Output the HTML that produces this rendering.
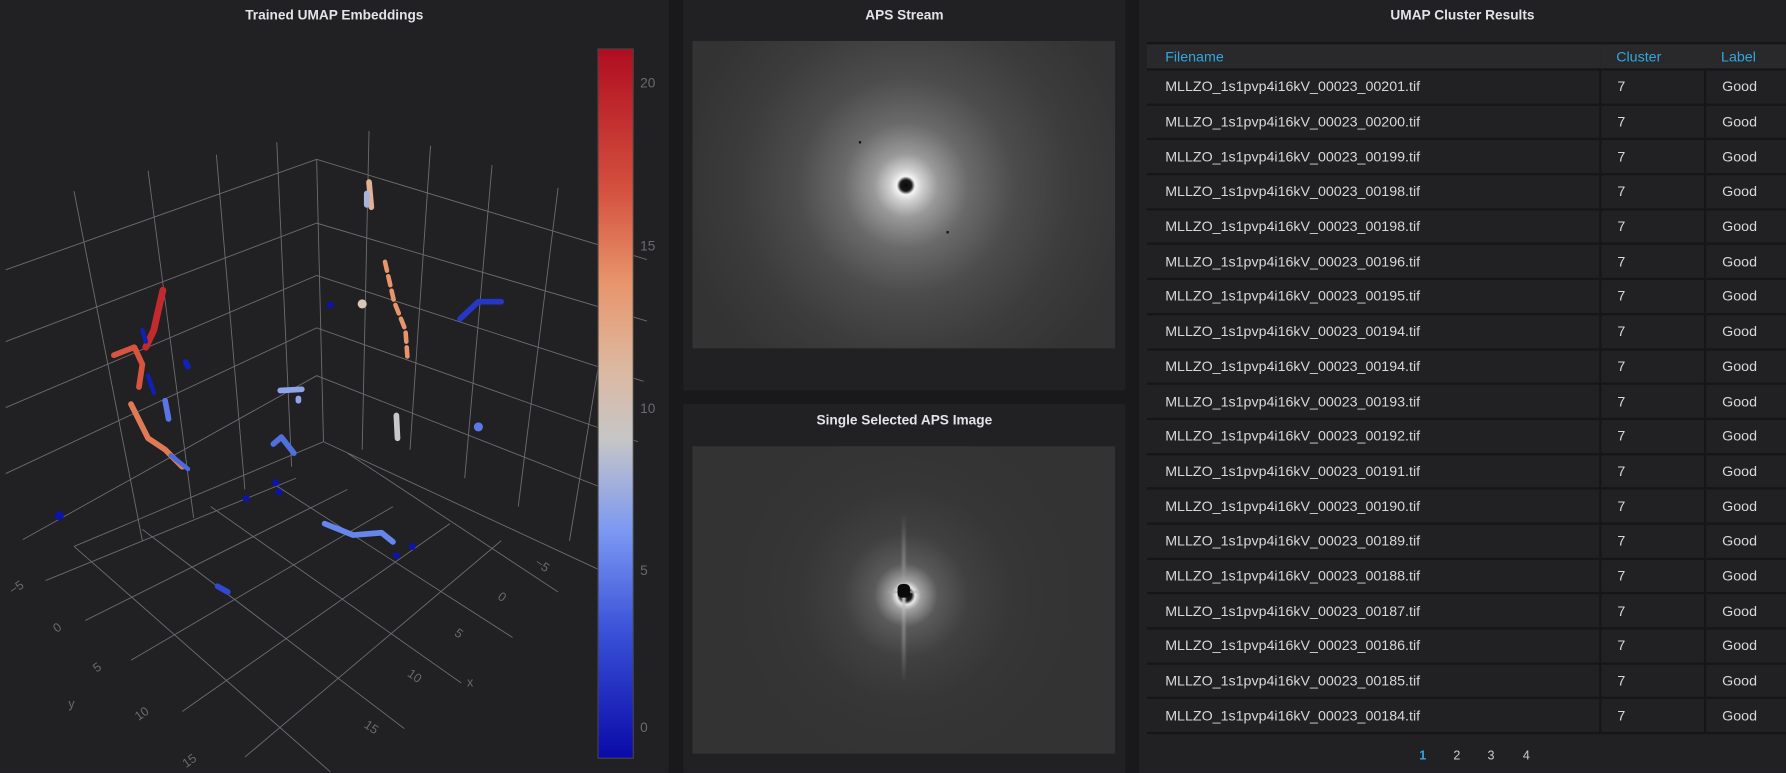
<!DOCTYPE html>
<html><head><meta charset="utf-8"><style>
html,body{margin:0;padding:0;background:#19191b;overflow:hidden;width:1786px;height:773px}
#w{position:absolute;left:0;top:0;width:1568px;height:679px;transform:scale(1.139,1.1384);transform-origin:0 0;font-family:"Liberation Sans",sans-serif}
.p{position:absolute;background:#212124;overflow:hidden}
.t{position:absolute;left:0;right:0;text-align:center;color:#e4e4e8;font-size:12px;font-weight:bold}
.img{position:absolute;background:#3a3a3a}
table{border-collapse:collapse;table-layout:fixed;position:absolute;left:7px;top:37px;width:561px;font-size:12.5px;color:#d8d8d8}
th{color:#33a7dc;font-weight:normal;text-align:left;height:21px;background:#29292c;border-top:2px solid #161618;border-bottom:2px solid #161618;padding:0}
td{height:28.7px;border-bottom:2px solid #161618;padding:0}
td.c{border-left:2px solid #161618}
.pg{position:absolute;top:658px;font-size:11px;color:#ccc}
</style></head><body><div id="w">
<div class="p" style="left:0;top:0;width:587px;height:679px">
<div class="t" style="top:6px">Trained UMAP Embeddings</div>
<svg width="587" height="679" style="position:absolute;left:0;top:0">
<g stroke="#6c6c70" stroke-width="0.8" fill="none">
<path d="M5,237 L278,140 L568,228"/>
<path d="M5,300 L278,196 L568,282"/>
<path d="M5,358 L278,242 L565,335"/>
<path d="M5,416 L278,288 L560,388"/>
<path d="M20,474 L278,330 L553,438"/>
<path d="M278,140 L284,388"/>
<path d="M65,168 L125,475"/><path d="M130,150 L170,455"/><path d="M190,136 L215,430"/><path d="M243,125 L256,410"/>
<path d="M324,115 L318,395"/><path d="M378,128 L360,395"/><path d="M432,145 L408,420"/><path d="M490,165 L455,445"/><path d="M548,185 L500,475"/>
<path d="M65,480 L284,388 L525,500"/>
<path d="M40,510 L260,420"/><path d="M75,545 L305,430"/><path d="M115,580 L345,445"/><path d="M160,625 L395,460"/><path d="M215,665 L440,475"/>
<path d="M65,480 L290,678"/><path d="M125,465 L355,640"/><path d="M185,445 L405,600"/><path d="M240,425 L450,560"/><path d="M305,398 L490,520"/>
</g>
<g fill="none" stroke-linecap="round" stroke-linejoin="round">
<path d="M143,255 L135,290 L128,305" stroke="#c22a2e" stroke-width="6"/>
<path d="M100,312 L118,305 L125,320 L122,340" stroke="#d9543f" stroke-width="5"/>
<path d="M115,355 L125,375 L130,385 L145,395 L160,410" stroke="#e07a55" stroke-width="5"/>
<path d="M150,400 L165,412" stroke="#4a6ae0" stroke-width="4"/>
<path d="M145,352 L148,368" stroke="#5a76e6" stroke-width="5"/>
<path d="M125,290 L128,300 M130,330 L135,345" stroke="#1020b0" stroke-width="4"/>
<path d="M163,318 L165,322" stroke="#1222b8" stroke-width="5"/>
<path d="M324,160 L326,182" stroke="#e2b296" stroke-width="5"/>
<path d="M322,170 L322,180" stroke="#a8b4d8" stroke-width="5"/>
<path d="M338,230 L346,265 L356,290 L358,318" stroke="#e8956b" stroke-width="4" stroke-dasharray="8,5"/>
<path d="M404,280 L420,265 L440,265" stroke="#2637c6" stroke-width="5"/>
<path d="M348,365 L349,385" stroke="#c8c8c8" stroke-width="5"/>
<path d="M246,343 L265,342 M262,350 L262,352" stroke="#8fa4ea" stroke-width="5"/>
<path d="M240,390 L247,384 L258,398" stroke="#5070e0" stroke-width="5"/>
<path d="M285,460 L310,470 L335,468 L345,476" stroke="#6686ee" stroke-width="5"/>
<path d="M191,515 L200,520" stroke="#3348d0" stroke-width="5"/>
</g>
<g fill="#0c14ac">
<circle cx="290" cy="268" r="3"/><circle cx="52" cy="453" r="4"/><circle cx="216" cy="438" r="3"/><circle cx="245" cy="432" r="3"/><circle cx="362" cy="480" r="3"/><circle cx="348" cy="488" r="3"/><circle cx="242" cy="424" r="3"/>
</g>
<circle cx="318" cy="267" r="4" fill="#d8c8b8"/><circle cx="420" cy="375" r="4" fill="#5a78e6"/>
<defs><linearGradient id="cb" x1="0" y1="0" x2="0" y2="1">
<stop offset="0" stop-color="#b00d20"/><stop offset="0.2" stop-color="#d4513f"/><stop offset="0.33" stop-color="#e8956b"/><stop offset="0.45" stop-color="#ddb8a0"/><stop offset="0.55" stop-color="#c6c6c6"/><stop offset="0.68" stop-color="#7c98f2"/><stop offset="0.82" stop-color="#3a52d8"/><stop offset="1" stop-color="#0a0aa8"/></linearGradient></defs>
<rect x="525" y="43" width="31" height="623" fill="url(#cb)" stroke="#444" stroke-width="1"/>
<g fill="#6a6a6e" font-size="12" font-family="Liberation Sans,sans-serif">
<text x="562" y="77">20</text><text x="562" y="220">15</text><text x="562" y="363">10</text><text x="562" y="505">5</text><text x="562" y="643">0</text>
</g>
<g fill="#6a6a6e" font-size="11" font-family="Liberation Sans,sans-serif">
<text x="8" y="520" transform="rotate(-35 14 516)">−5</text><text x="47" y="555" transform="rotate(-35 50 551)">0</text><text x="82" y="590" transform="rotate(-35 85 586)">5</text><text x="60" y="622">y</text><text x="118" y="630" transform="rotate(-35 125 626)">10</text><text x="160" y="672" transform="rotate(-35 166 668)">15</text>
<text x="470" y="500" transform="rotate(35 476 496)">−5</text><text x="438" y="528" transform="rotate(35 441 524)">0</text><text x="400" y="560" transform="rotate(35 403 556)">5</text><text x="410" y="603">x</text><text x="358" y="598" transform="rotate(35 365 594)">10</text><text x="320" y="643" transform="rotate(35 327 639)">15</text>
</g>
</svg>
</div>
<div class="p" style="left:600px;top:0;width:388px;height:343px">
<div class="t" style="top:6px">APS Stream</div>
<div class="img" style="left:8px;top:36px;width:371px;height:270px;background:radial-gradient(circle at 50.5% 47%,#0a0a0a 0,#1a1a1a 5px,#f4f4f4 8px,#d0d0d0 14px,#999 28px,#6a6a6a 55px,#4c4c4c 95px,#3c3c3c 145px,#333 200px)"></div>
<div style="position:absolute;left:154px;top:124px;width:2px;height:2px;background:#111"></div>
<div style="position:absolute;left:231px;top:203px;width:2px;height:2px;background:#111"></div>
</div>
<div class="p" style="left:600px;top:355px;width:388px;height:324px">
<div class="t" style="top:7px">Single Selected APS Image</div>
<div class="img" style="left:8px;top:37px;width:371px;height:270px;background:radial-gradient(circle at 50.5% 48.5%,#0a0a0a 0,#151515 5px,#e8e8e8 8px,#a0a0a0 13px,#5a5a5a 28px,#404040 55px,#363636 95px,#333 150px)"></div>
<div style="position:absolute;left:192px;top:95px;width:3px;height:150px;background:linear-gradient(rgba(60,60,60,0),#888 35%,#ddd 50%,#888 65%,rgba(60,60,60,0));filter:blur(1px)"></div>
<div style="position:absolute;left:176px;top:164px;width:36px;height:2px;background:linear-gradient(90deg,rgba(60,60,60,0),#aaa,rgba(60,60,60,0))"></div>
<div style="position:absolute;left:188px;top:158px;width:11px;height:12px;border-radius:4px;background:#0a0a0a"></div>
</div>
<div class="p" style="left:1000px;top:0;width:568px;height:679px">
<div class="t" style="top:6px">UMAP Cluster Results</div>
<table>
<colgroup><col style="width:398px"><col style="width:92px"><col style="width:71px"></colgroup>
<tr><th style="padding-left:16px">Filename</th><th style="padding-left:14px">Cluster</th><th style="padding-left:14px">Label</th></tr>
<tr><td style="padding-left:16px">MLLZO_1s1pvp4i16kV_00023_00201.tif</td><td class="c" style="padding-left:14px">7</td><td class="c" style="padding-left:14px">Good</td></tr>
<tr><td style="padding-left:16px">MLLZO_1s1pvp4i16kV_00023_00200.tif</td><td class="c" style="padding-left:14px">7</td><td class="c" style="padding-left:14px">Good</td></tr>
<tr><td style="padding-left:16px">MLLZO_1s1pvp4i16kV_00023_00199.tif</td><td class="c" style="padding-left:14px">7</td><td class="c" style="padding-left:14px">Good</td></tr>
<tr><td style="padding-left:16px">MLLZO_1s1pvp4i16kV_00023_00198.tif</td><td class="c" style="padding-left:14px">7</td><td class="c" style="padding-left:14px">Good</td></tr>
<tr><td style="padding-left:16px">MLLZO_1s1pvp4i16kV_00023_00198.tif</td><td class="c" style="padding-left:14px">7</td><td class="c" style="padding-left:14px">Good</td></tr>
<tr><td style="padding-left:16px">MLLZO_1s1pvp4i16kV_00023_00196.tif</td><td class="c" style="padding-left:14px">7</td><td class="c" style="padding-left:14px">Good</td></tr>
<tr><td style="padding-left:16px">MLLZO_1s1pvp4i16kV_00023_00195.tif</td><td class="c" style="padding-left:14px">7</td><td class="c" style="padding-left:14px">Good</td></tr>
<tr><td style="padding-left:16px">MLLZO_1s1pvp4i16kV_00023_00194.tif</td><td class="c" style="padding-left:14px">7</td><td class="c" style="padding-left:14px">Good</td></tr>
<tr><td style="padding-left:16px">MLLZO_1s1pvp4i16kV_00023_00194.tif</td><td class="c" style="padding-left:14px">7</td><td class="c" style="padding-left:14px">Good</td></tr>
<tr><td style="padding-left:16px">MLLZO_1s1pvp4i16kV_00023_00193.tif</td><td class="c" style="padding-left:14px">7</td><td class="c" style="padding-left:14px">Good</td></tr>
<tr><td style="padding-left:16px">MLLZO_1s1pvp4i16kV_00023_00192.tif</td><td class="c" style="padding-left:14px">7</td><td class="c" style="padding-left:14px">Good</td></tr>
<tr><td style="padding-left:16px">MLLZO_1s1pvp4i16kV_00023_00191.tif</td><td class="c" style="padding-left:14px">7</td><td class="c" style="padding-left:14px">Good</td></tr>
<tr><td style="padding-left:16px">MLLZO_1s1pvp4i16kV_00023_00190.tif</td><td class="c" style="padding-left:14px">7</td><td class="c" style="padding-left:14px">Good</td></tr>
<tr><td style="padding-left:16px">MLLZO_1s1pvp4i16kV_00023_00189.tif</td><td class="c" style="padding-left:14px">7</td><td class="c" style="padding-left:14px">Good</td></tr>
<tr><td style="padding-left:16px">MLLZO_1s1pvp4i16kV_00023_00188.tif</td><td class="c" style="padding-left:14px">7</td><td class="c" style="padding-left:14px">Good</td></tr>
<tr><td style="padding-left:16px">MLLZO_1s1pvp4i16kV_00023_00187.tif</td><td class="c" style="padding-left:14px">7</td><td class="c" style="padding-left:14px">Good</td></tr>
<tr><td style="padding-left:16px">MLLZO_1s1pvp4i16kV_00023_00186.tif</td><td class="c" style="padding-left:14px">7</td><td class="c" style="padding-left:14px">Good</td></tr>
<tr><td style="padding-left:16px">MLLZO_1s1pvp4i16kV_00023_00185.tif</td><td class="c" style="padding-left:14px">7</td><td class="c" style="padding-left:14px">Good</td></tr>
<tr><td style="padding-left:16px">MLLZO_1s1pvp4i16kV_00023_00184.tif</td><td class="c" style="padding-left:14px">7</td><td class="c" style="padding-left:14px">Good</td></tr>
</table>
<div style="position:absolute;left:0;top:650px;width:568px;height:29px;background:#212124"></div>
<div class="pg" style="left:246px;color:#33a7dc;font-weight:bold">1</div>
<div class="pg" style="left:276px">2</div>
<div class="pg" style="left:306px">3</div>
<div class="pg" style="left:337px">4</div>
</div>
</div></body></html>
